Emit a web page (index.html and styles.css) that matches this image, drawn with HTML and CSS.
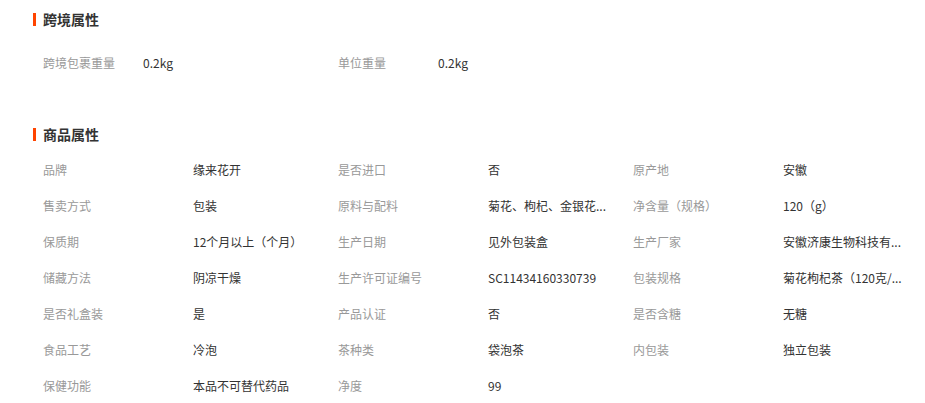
FILE: index.html
```html
<!DOCTYPE html>
<html lang="zh-CN">
<head>
    <meta charset="UTF-8">
    <title>商品属性</title>
    <link rel="stylesheet" href="styles.css">
</head>
<body>
    <div class="attr-panel">
        <div class="section cross">
            <h3 class="section-title">跨境属性</h3>
            <ul class="attr-list">
                <li><span class="label">跨境包裹重量</span><span class="value">0.2kg</span></li>
                <li><span class="label">单位重量</span><span class="value">0.2kg</span></li>
            </ul>
        </div>

        <div class="section goods">
            <h3 class="section-title">商品属性</h3>
            <ul class="attr-list">
                <li><span class="label">品牌</span><span class="value">缘来花开</span></li>
                <li><span class="label">是否进口</span><span class="value">否</span></li>
                <li><span class="label">原产地</span><span class="value">安徽</span></li>

                <li><span class="label">售卖方式</span><span class="value">包装</span></li>
                <li><span class="label">原料与配料</span><span class="value">菊花、枸杞、金银花...</span></li>
                <li><span class="label">净含量（规格）</span><span class="value">120（g）</span></li>

                <li><span class="label">保质期</span><span class="value">12个月以上（个月）</span></li>
                <li><span class="label">生产日期</span><span class="value">见外包装盒</span></li>
                <li><span class="label">生产厂家</span><span class="value">安徽济康生物科技有...</span></li>

                <li><span class="label">储藏方法</span><span class="value">阴凉干燥</span></li>
                <li><span class="label">生产许可证编号</span><span class="value">SC11434160330739</span></li>
                <li><span class="label">包装规格</span><span class="value">菊花枸杞茶（120克/...</span></li>

                <li><span class="label">是否礼盒装</span><span class="value">是</span></li>
                <li><span class="label">产品认证</span><span class="value">否</span></li>
                <li><span class="label">是否含糖</span><span class="value">无糖</span></li>

                <li><span class="label">食品工艺</span><span class="value">冷泡</span></li>
                <li><span class="label">茶种类</span><span class="value">袋泡茶</span></li>
                <li><span class="label">内包装</span><span class="value">独立包装</span></li>

                <li><span class="label">保健功能</span><span class="value">本品不可替代药品</span></li>
                <li><span class="label">净度</span><span class="value">99</span></li>
            </ul>
        </div>
    </div>
</body>
</html>
```

FILE: styles.css
```css
body {
    margin: 0;
    background-color: #fff;
    font-family: "Microsoft YaHei", "Noto Sans CJK SC", sans-serif;
    font-size: 12px;
    color: #333;
}

.attr-panel {
    padding: 8px 0 0 33px;
    width: 885px;
}

.section-title {
    display: flex;
    align-items: center;
    margin: 0;
    height: 22px;
    line-height: 22px;
    font-size: 14px;
    font-weight: bold;
    color: #333;
}

.section-title::before {
    content: "";
    display: block;
    width: 3px;
    height: 13px;
    margin-right: 7px;
    background-color: #ff4400;
}

.attr-list {
    list-style: none;
    margin: 0;
    padding: 0 0 0 10px;
    display: grid;
    grid-template-columns: repeat(3, 295px);
}

.attr-list li {
    display: flex;
    align-items: center;
    height: 36px;
}

.label {
    width: 150px;
    flex-shrink: 0;
    color: #999;
}

.value {
    white-space: nowrap;
    color: #333;
}

.cross .attr-list {
    margin-top: 14px;
}

.cross .label {
    width: 100px;
}

.goods {
    margin-top: 43px;
}

.goods .attr-list {
    margin-top: 6px;
}
```
